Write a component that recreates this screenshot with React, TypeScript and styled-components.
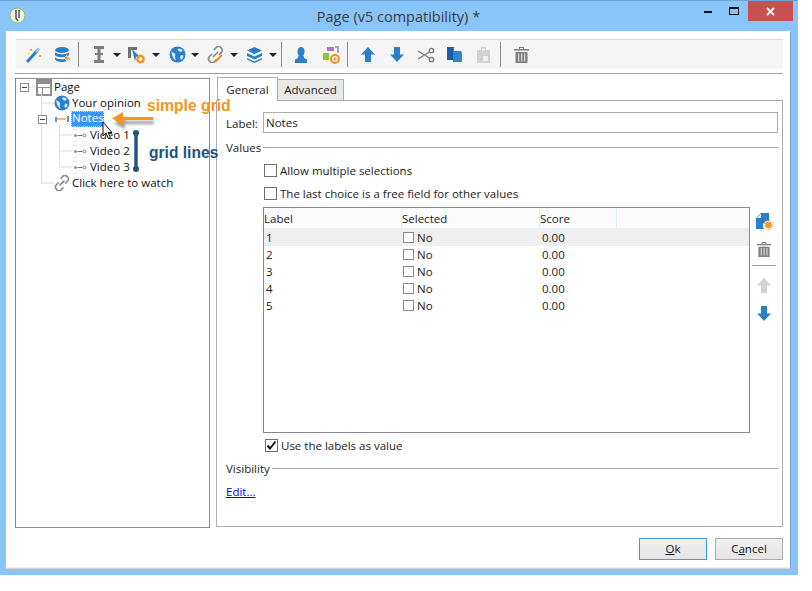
import React from "react";
import styled, { createGlobalStyle } from "styled-components";

const Global = createGlobalStyle`
  html, body { margin: 0; padding: 0; background: #fff; }
  * { box-sizing: border-box; }
  body { font-family: "Open Sans", "Noto Sans", sans-serif; font-size: 11.5px; color: #1c1c1c; }
`;

const Frame = styled.div`
  width: 798px; height: 575px; background: #8ac5fa; border-top: 1px solid #6fa3d6;
  display: flex; flex-direction: column; padding: 0 7px 6px 6px;
`;
const TitleBar = styled.div`
  position: relative; height: 30px; flex: none; display: flex; align-items: center; justify-content: center;
`;
const Title = styled.div`font-size: 14.5px; color: #3a3a3a;`;
const AppIcon = styled.svg`position: absolute; left: 3px; top: 6px;`;
const WinButtons = styled.div`position: absolute; right: -2px; top: 0; display: flex; align-items: flex-start;`;
const WinBtn = styled.div<{ $w: number; $close?: boolean }>`
  width: ${p => p.$w}px; height: 20px; display: flex; align-items: center; justify-content: center;
  background: ${p => (p.$close ? "#c75050" : "transparent")};
`;
const Inner = styled.div`
  flex: 1; background: #fff; border-right: 1px solid #6fa3d6; border-top: 1px solid #fff;
  border-bottom: 1px solid #d4d4d4; padding: 7px 8px 0 9px; display: flex; flex-direction: column; min-height: 0;
  box-shadow: inset 0 -1px 0 #f0f0f0;
`;
const Toolbar = styled.div`
  height: 30px; flex: none; background: #f5f5f5; border-top: 1px solid #d9d9d9; display: flex; align-items: center; padding-left: 3px; margin: 0 -1px 0 1px;
`;
const ToolBtn = styled.div<{ $w?: number }>`
  width: ${p => p.$w ?? 29}px; height: 24px; flex: none; display: flex; align-items: center; justify-content: center;
`;
const CaretBtn = styled.div<{ $w: number; $gap: number }>`
  width: ${p => p.$w}px; height: 24px; flex: none; display: flex; align-items: center; gap: ${p => p.$gap}px;
`;
const IconSlot = styled.span`width: 20px; flex: none; display: flex; align-items: center; justify-content: center;`;
const Caret = styled.span`
  width: 0; height: 0; border-left: 4px solid transparent; border-right: 4px solid transparent; border-top: 4px solid #222;
`;
const ToolSep = styled.div<{ $l: number; $r: number }>`
  width: 1px; height: 25px; background: #8a8a8a; flex: none; margin: 0 ${p => p.$r}px 0 ${p => p.$l}px;
`;
const ToolRule = styled.div`height: 1px; background: #a0a0a0; margin: 4px -1px 0 0; flex: none;`;
const Split = styled.div`flex: 1; display: flex; gap: 6px; margin-top: 4px; min-height: 0;`;
const TreePanel = styled.div`
  position: relative; width: 195px; height: 450px; flex: none; background: #fff; border: 1px solid #8d8d8d;
`;
const TreeRow = styled.div<{ $indent: number }>`
  height: 16px; display: flex; align-items: center; padding-left: ${p => p.$indent}px; white-space: nowrap; gap: 2px; color: #111;
`;
const TreeText = styled.span`margin-bottom: 2px;`;
const Selected = styled.span`
  background: #3399ff; color: #fff; outline: 1px dotted #cfe6ff; outline-offset: -1px; padding: 0 2px 0 1px; height: 16px; line-height: 14px; width: 33px; margin-left: -1px;
`;
const Expander = styled.span`
  width: 9px; height: 9px; flex: none; border: 1px solid #8c8c8c; position: relative; background: #fff; margin-right: 5px;
  &::after { content: ""; position: absolute; left: 1px; top: 3px; width: 5px; height: 1px; background: #444; }
`;
const TreeLines = styled.svg`position: absolute; left: 0; top: 0; pointer-events: none;`;
const Overlay = styled.svg`position: absolute; left: 0; top: 0; pointer-events: none; overflow: visible;`;
const SimpleGrid = styled.div`
  position: absolute; left: 131px; top: 18px; font: bold 15.7px "Liberation Sans", sans-serif; color: #f7941d; white-space: nowrap; z-index: 2;
`;
const GridLines = styled.div`
  position: absolute; left: 133px; top: 65px; font: bold 15.6px "Liberation Sans", sans-serif; color: #22527f; white-space: nowrap; z-index: 2;
`;
const Right = styled.div`flex: 1; display: flex; flex-direction: column; min-width: 0;`;
const Tabs = styled.div`display: flex; height: 23px; flex: none; align-items: flex-end; padding-left: 1px; margin-bottom: -1px; position: relative; z-index: 1;`;
const Tab = styled.div<{ $active?: boolean }>`
  height: ${p => (p.$active ? 24 : 22)}px; width: ${p => (p.$active ? 61 : 67)}px; border: 1px solid #acacac;
  border-bottom: ${p => (p.$active ? "none" : "1px solid #acacac")};
  background: ${p => (p.$active ? "#fff" : "#e9e9e9")}; margin-left: ${p => (p.$active ? 0 : -1)}px;
  padding-bottom: ${p => (p.$active ? 0 : 2)}px;
  display: flex; align-items: center; justify-content: center; color: #222;
`;
const TabPanel = styled.div`
  width: 567px; height: 427px; border: 1px solid #acacac; padding: 11px 4px 0 9px; background: #fff;
`;
const FieldRow = styled.div`display: flex; align-items: center; height: 21px;`;
const FieldLabel = styled.span`width: 37px; flex: none; margin-top: 1px;`;
const TextInput = styled.div`flex: 1; height: 21px; border: 1px solid #acacac; padding: 0 2px; line-height: 19px;`;
const Legend = styled.div<{ $top: number }>`
  display: flex; align-items: center; gap: 2px; height: 16px; margin-top: ${p => p.$top}px;
  &::after { content: ""; flex: 1; height: 1px; background: #a0a0a0; }
`;
const CheckRow = styled.label<{ $top: number; $left?: number }>`
  display: flex; align-items: center; gap: 3px; height: 13px; margin-top: ${p => p.$top}px; margin-left: ${p => p.$left ?? 38}px;
`;
const Box = styled.span`
  width: 13px; height: 13px; flex: none; border: 1px solid #707070; background: #fff; display: flex; align-items: center; justify-content: center;
`;
const GridWrap = styled.div`display: flex; margin: 7px 0 0 37px; gap: 2px;`;
const Table = styled.div`width: 487px; height: 226px; border: 1px solid #828790; background: #fff; flex: none;`;
const HeadRow = styled.div`
  height: 21px; display: grid; grid-template-columns: 138px 138px 77px 1fr; background: #fbfbfb; border-bottom: 1px solid #e6eef8;
`;
const HeadCell = styled.div`line-height: 21px; border-right: 1px solid #e6eef8;`;
const BodyRow = styled.div<{ $current?: boolean }>`
  height: 17px; display: grid; grid-template-columns: 138px 138px 1fr; align-items: center;
  background: ${p => (p.$current ? "#efefef" : "transparent")};
`;
const NumCell = styled.div`padding-left: 2px;`;
const SelCell = styled.div`display: flex; align-items: center; gap: 3px; padding-left: 1px;`;
const SmallBox = styled.span`width: 11px; height: 11px; border: 1px solid #8a8a8a; background: #fff; flex: none;`;
const ScoreCell = styled.div`padding-left: 2px;`;
const SideTools = styled.div`width: 24px; flex: none; display: flex; flex-direction: column; align-items: center;`;
const SideBtn = styled.div`height: 28px; display: flex; align-items: center; justify-content: center; width: 24px;`;
const SideSep = styled.div`width: 24px; height: 1px; background: #9a9a9a; margin: 2px 0 5px;`;
const EditLink = styled.a`display: block; color: #0000ee; text-decoration: underline; margin-top: 8px; line-height: 16px;`;
const Footer = styled.div`height: 40px; flex: none; display: flex; justify-content: flex-end; align-items: flex-start; gap: 8px; padding: 10px 0 0; margin-right: -1px;`;
const Button = styled.div<{ $primary?: boolean }>`
  width: 68px; height: 22px; background: linear-gradient(#f0f0f0, #e5e5e5); border: 1px solid ${p => (p.$primary ? "#3c9af0" : "#acacac")};
  display: flex; align-items: center; justify-content: center; color: #111; padding-bottom: 2px;
  u { text-decoration: underline; }
`;

const blue = "#2a7fc9";
const Wand = () => (
  <svg width="18" height="18" viewBox="0 0 18 18">
    <path d="M2 16 L12 5" stroke={blue} strokeWidth="3" />
    <path d="M11 6 L14 2.5" stroke="#8fc0ea" strokeWidth="3" />
    <g fill="#f5a623"><rect x="5" y="3" width="2" height="2" /><rect x="14" y="9" width="2" height="2" /><rect x="3" y="7" width="1" height="1" /></g>
  </svg>
);
const Db = () => (
  <svg width="18" height="18" viewBox="0 0 18 18">
    <ellipse cx="8" cy="4" rx="7" ry="3" fill={blue} />
    <path d="M1 6c1 3 13 3 14 0v3c-1 3-13 3-14 0zM1 11c1 3 13 3 14 0v2c-1 4-13 4-14 0z" fill={blue} />
    <path d="M10 12 L13 9 V11 C16 11 17 13 17 16 C16 14 15 13 13 13 V15z" fill="#e8952a" stroke="#fff" strokeWidth=".6" />
  </svg>
);
const IBeam = () => (
  <svg width="12" height="17" viewBox="0 0 12 17" fill="#7d7d7d">
    <rect x="1" y="0" width="10" height="3" /><rect x="1" y="14" width="10" height="3" /><rect x="4.5" y="3" width="3" height="11" /><rect x="2" y="7" width="8" height="2" />
  </svg>
);
const CursorGear = () => (
  <svg width="18" height="18" viewBox="0 0 18 18">
    <path d="M1 1h9v3H4v8H1z" fill="#6f6f6f" />
    <path d="M5 3l7 7-3 1-1 4z" fill={blue} />
    <circle cx="13.5" cy="13" r="3" fill="none" stroke="#ef8f1f" strokeWidth="2" />
    <circle cx="13.5" cy="13" r="4.3" fill="none" stroke="#ef8f1f" strokeWidth="1" strokeDasharray="1.5 1.5" />
  </svg>
);
const Globe = ({ s = 17 }: { s?: number }) => (
  <svg width={s} height={s} viewBox="0 0 17 17">
    <circle cx="8.5" cy="8.5" r="8" fill={blue} />
    <path d="M4 3C3 4 2.500 5.500 3.500 6.500l2 .5 1 2.500L6 11.500l1 3C5 13.500 3.500 11 3 9 2 7 2.500 4.500 4 3zM10 2.500l3 1 .5 1.500-2 1-2-1-1-1.500zM12 9l2.500.5-.5 2.500-2 2-1-2.500z" fill="#dbe9f6" />
  </svg>
);
const LinkIcon = ({ s = 17, pen = true }: { s?: number; pen?: boolean }) => (
  <svg width={s} height={s} viewBox="0 0 17 17" fill="none">
    <path d="M7 4l2-2.200a3 3 0 0 1 5 0 3 3 0 0 1 .5 4.500L12 9" stroke="#8a8a8a" strokeWidth="1.700" />
    <path d="M10 13l-2 2.200a3 3 0 0 1-5.500-.2 3 3 0 0 1 0-4.500L5 8" stroke="#8a8a8a" strokeWidth="1.700" />
    <path d="M6 11l5-5" stroke="#8a8a8a" strokeWidth="1.700" />
    {pen && <path d="M8 16l7-7" stroke="#f0932b" strokeWidth="2.200" />}
  </svg>
);
const Boxes = () => (
  <svg width="17" height="17" viewBox="0 0 17 17" fill={blue}>
    <path d="M8.500 1L16 4.500 8.500 8 1 4.500z" />
    <path d="M1 7l7.500 3.500L16 7v3l-7.500 3.500L1 10z" />
    <path d="M1 12l7.500 3.500L16 12v1.500L8.500 17 1 13.500z" />
  </svg>
);
const Person = () => (
  <svg width="14" height="16" viewBox="0 0 14 16" fill={blue}>
    <ellipse cx="7" cy="4.500" rx="3.500" ry="4.500" />
    <path d="M4.500 8.500h5l.5 2.500 3 1.500V16H1v-3.500L4 11z" />
  </svg>
);
const Shapes = () => (
  <svg width="19" height="18" viewBox="0 0 19 18">
    <rect x="5" y="1" width="7" height="4" fill="#b56fd6" />
    <path d="M13 0h4v7h-2V2h-2z" fill="#9aa9c4" />
    <rect x="1" y="7" width="6" height="7" fill="#8cc63f" />
    <circle cx="13" cy="13" r="4" fill="none" stroke="#ef8f1f" strokeWidth="2" />
    <path d="M11 13h4M13 11v4" stroke="#ef8f1f" />
  </svg>
);
const Arrow = ({ up, color = blue }: { up?: boolean; color?: string }) => (
  <svg width="16" height="17" viewBox="0 0 16 16" fill={color} preserveAspectRatio="none">
    <path d={up ? "M8 1l7 7H11v7H5V8H1z" : "M8 15L1 8h4V1h6v7h4z"} />
  </svg>
);
const Scissors = () => (
  <svg width="18" height="16" viewBox="0 0 18 16" fill="none" stroke="#7c7c7c" strokeWidth="1.300">
    <circle cx="14.500" cy="3.500" r="2.200" /><circle cx="14.500" cy="12.500" r="2.200" />
    <path d="M12.700 4.800L1 12M12.700 11.200L1 4" />
  </svg>
);
const Copy = () => (
  <svg width="16" height="17" viewBox="0 0 16 17">
    <path d="M0 1h6v13H0z" fill="#1e5ea8" />
    <path d="M6 1h2l1 4h5l1 2v9H6z" fill="#2f86d6" />
    <path d="M7 1l4 4H7z" fill="#fff" />
  </svg>
);
const Paste = () => (
  <svg width="13" height="16" viewBox="0 0 13 16">
    <path d="M0 3h4V0h5v3h4v13H0z" fill="#d2d2d2" /><rect x="5" y="1.500" width="3" height="2" fill="#f5f5f5" />
    <path d="M6 9h5v5H6z" fill="#f0f0f0" />
  </svg>
);
const Trash = ({ s = 15 }: { s?: number }) => (
  <svg width={s} height={s + 1} viewBox="0 0 15 16">
    <path d="M5 2V0h5v2h5v1.500H0V2zM6 1v1h3V1z" fill="#7e7e7e" />
    <path d="M1.500 5h12v11h-12z" fill="#7e7e7e" />
    <path d="M4 6.500h1.300v8H4zM7 6.500h1.300v8H7zM10 6.500h1.300v8H10z" fill="#d8d8d8" />
  </svg>
);
const NewDoc = () => (
  <svg width="17" height="17" viewBox="0 0 17 17">
    <path d="M0 5L5 0h8v8a5 5 0 0 0-5 8H0z" fill="#2a7fc9" />
    <path d="M5 1v4H1z" fill="#fff" />
    <circle cx="12.500" cy="12" r="3.300" fill="#f39a1e" />
    <circle cx="12.500" cy="12" r="4.500" fill="none" stroke="#f39a1e" strokeDasharray="1.500 1.500" />
  </svg>
);
const PageIcon = () => (
  <svg width="16" height="17" viewBox="0 0 16 17">
    <rect width="16" height="17" fill="#8e8e8e" />
    <rect x="2" y="5" width="12" height="3" fill="#fff" />
    <rect x="2" y="9" width="4" height="6" fill="#fff" />
    <rect x="7" y="9" width="7" height="6" fill="#fff" />
  </svg>
);
const FieldIcon = () => (
  <svg width="16" height="16" viewBox="0 0 16 16">
    <path d="M2 6v5M14 5v6" stroke="#2a7fc9" strokeWidth="1.600" />
    <path d="M3 8h9" stroke="#ef8f1f" strokeWidth="1.300" />
  </svg>
);
const VideoIcon = () => (
  <svg width="15" height="15" viewBox="0 0 15 15" fill="none">
    <g stroke="#d4d4d4" strokeWidth=".8" strokeDasharray="1.500 1"><path d="M1 1.500h3M10 1.500h4M1 13.500h3M10 13.500h4" /></g>
    <circle cx="2.500" cy="7.500" r="1.500" fill="#7da86a" />
    <path d="M4.500 7.500h5" stroke="#777" />
    <circle cx="11.500" cy="7.500" r="1.500" stroke="#7d8fa0" />
  </svg>
);

const caretTools = [
  { icon: <IBeam />, w: 37, gap: 4 },
  { icon: <CursorGear />, w: 41, gap: 6 },
  { icon: <Globe />, w: 38, gap: 4 },
  { icon: <LinkIcon />, w: 39, gap: 5 },
  { icon: <Boxes />, w: 37, gap: 5 },
];
const rows = ["1", "2", "3", "4", "5"];

export default function App() {
  return (
    <>
      <Global />
      <Frame>
        <TitleBar>
          <AppIcon width="17" height="17" viewBox="0 0 17 17">
            <circle cx="8.500" cy="8.500" r="7.500" fill="#eef0ea" stroke="#8fbf4d" />
            <path d="M7 3v8l2 3M10 3v8" stroke="#555" strokeWidth="1.500" fill="none" />
          </AppIcon>
          <Title>Page (v5 compatibility) *</Title>
          <WinButtons>
            <WinBtn $w={24}>
              <svg width="8" height="3"><rect width="8" height="2" y="1" fill="#111" /></svg>
            </WinBtn>
            <WinBtn $w={28}>
              <svg width="10" height="8"><rect x=".5" y=".5" width="9" height="7" fill="none" stroke="#111" /><rect width="10" height="2" fill="#111" /></svg>
            </WinBtn>
            <WinBtn $w={45} $close>
              <svg width="9" height="9" viewBox="0 0 9 9"><path d="M1 1l7 7M8 1L1 8" stroke="#fff" strokeWidth="1.800" /></svg>
            </WinBtn>
          </WinButtons>
        </TitleBar>
        <Inner>
          <Toolbar>
            <ToolBtn><Wand /></ToolBtn>
            <ToolBtn><Db /></ToolBtn>
            <ToolSep $l={1} $r={10} />
            {caretTools.map((t, i) => (
              <CaretBtn key={i} $w={t.w} $gap={t.gap}><IconSlot>{t.icon}</IconSlot><Caret /></CaretBtn>
            ))}
            <ToolSep $l={0} $r={4} />
            <ToolBtn $w={30}><Person /></ToolBtn>
            <ToolBtn $w={30}><Shapes /></ToolBtn>
            <ToolSep $l={1} $r={5} />
            <ToolBtn><Arrow up /></ToolBtn>
            <ToolBtn><Arrow /></ToolBtn>
            <ToolBtn><Scissors /></ToolBtn>
            <ToolBtn><Copy /></ToolBtn>
            <ToolBtn><Paste /></ToolBtn>
            <ToolSep $l={2} $r={6} />
            <ToolBtn><Trash /></ToolBtn>
          </Toolbar>
          <ToolRule />
          <Split>
            <TreePanel>
              <TreeLines width="193" height="120">
                <path d="M25.500 13V104M25.500 24H38M25.500 104H38M43.500 46V88M43.500 56H56M43.500 72H56M43.500 88H56M13 8H20" stroke="#e2dcd2" fill="none" />
              </TreeLines>
              <TreeRow $indent={4}><Expander /><PageIcon /><TreeText>Page</TreeText></TreeRow>
              <TreeRow $indent={38}><Globe s={16} /><TreeText>Your opinion</TreeText></TreeRow>
              <TreeRow $indent={22}><Expander /><FieldIcon /><Selected>Notes</Selected></TreeRow>
              <TreeRow $indent={57}><VideoIcon /><TreeText>Video 1</TreeText></TreeRow>
              <TreeRow $indent={57}><VideoIcon /><TreeText>Video 2</TreeText></TreeRow>
              <TreeRow $indent={57}><VideoIcon /><TreeText>Video 3</TreeText></TreeRow>
              <TreeRow $indent={38}><LinkIcon s={16} pen={false} /><TreeText>Click here to watch</TreeText></TreeRow>
              <SimpleGrid>simple grid</SimpleGrid>
              <GridLines>grid lines</GridLines>
              <Overlay width="193" height="120">
                <defs>
                  <filter id="sh" x="-100%" y="-50%" width="300%" height="200%"><feGaussianBlur stdDeviation="1.500" /></filter>
                </defs>
                <path d="M121 55V92" stroke="#888" strokeWidth="3" filter="url(#sh)" transform="translate(3,3)" />
                <path d="M120 53V91" stroke="#22527f" strokeWidth="3.400" />
                <circle cx="120" cy="54" r="3" fill="#22527f" />
                <circle cx="120" cy="90" r="3" fill="#22527f" />
                <path d="M97 41l11-6v4h29v3H108v5z" fill="#999" filter="url(#sh)" transform="translate(1,3)" />
                <path d="M96 39.500L107 33v5h30v3H107v5z" fill="#f7941d" />
                <path d="M87 43v14l3-3 2.500 5.500 2-1-2.500-5h4z" fill="#fff" stroke="#111" strokeWidth="1" />
              </Overlay>
            </TreePanel>
            <Right>
              <Tabs>
                <Tab $active>General</Tab>
                <Tab>Advanced</Tab>
              </Tabs>
              <TabPanel>
                <FieldRow><FieldLabel>Label:</FieldLabel><TextInput>Notes</TextInput></FieldRow>
                <Legend $top={6}>Values</Legend>
                <CheckRow $top={9}><Box /><span>Allow multiple selections</span></CheckRow>
                <CheckRow $top={10}><Box /><span>The last choice is a free field for other values</span></CheckRow>
                <GridWrap>
                  <Table>
                    <HeadRow>
                      <HeadCell>Label</HeadCell>
                      <HeadCell>Selected</HeadCell>
                      <HeadCell>Score</HeadCell>
                    </HeadRow>
                    {rows.map((r, i) => (
                      <BodyRow key={r} $current={i === 0}>
                        <NumCell>{r}</NumCell>
                        <SelCell><SmallBox /><span>No</span></SelCell>
                        <ScoreCell>0.00</ScoreCell>
                      </BodyRow>
                    ))}
                  </Table>
                  <SideTools>
                    <SideBtn><NewDoc /></SideBtn>
                    <SideBtn><Trash s={14} /></SideBtn>
                    <SideSep />
                    <SideBtn><Arrow up color="#d2d2d2" /></SideBtn>
                    <SideBtn><Arrow /></SideBtn>
                  </SideTools>
                </GridWrap>
                <CheckRow $top={6} $left={39}>
                  <Box>
                    <svg width="11" height="11" viewBox="0 0 11 11"><path d="M1.500 5.500L4 8.500 9.500 1.500" fill="none" stroke="#111" strokeWidth="2" /></svg>
                  </Box>
                  <span>Use the labels as value</span>
                </CheckRow>
                <Legend $top={8}>Visibility</Legend>
                <EditLink>Edit...</EditLink>
              </TabPanel>
            </Right>
          </Split>
          <Footer>
            <Button $primary><span><u>O</u>k</span></Button>
            <Button><span>C<u>a</u>ncel</span></Button>
          </Footer>
        </Inner>
      </Frame>
    </>
  );
}
